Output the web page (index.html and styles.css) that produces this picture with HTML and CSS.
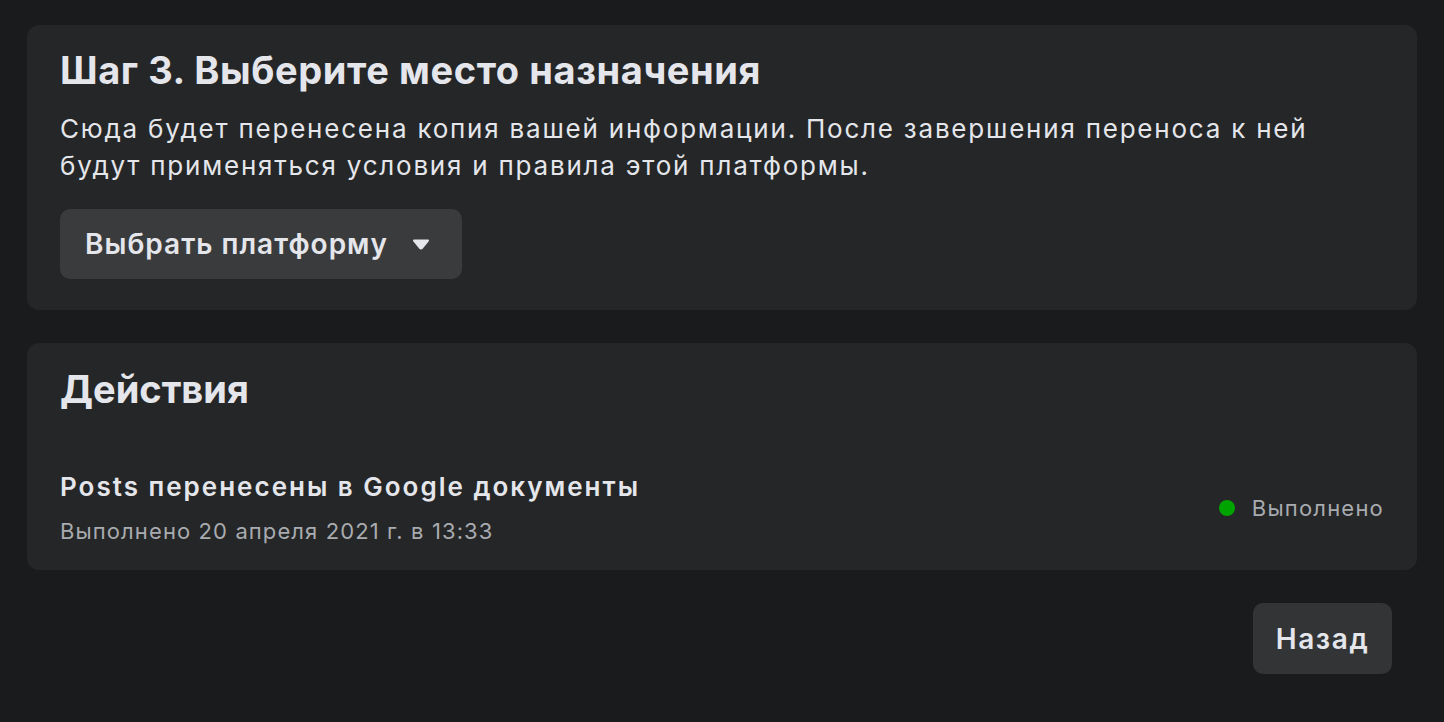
FILE: index.html
```html
<!DOCTYPE html>
<html lang="ru">
<head>
<meta charset="utf-8">
<link rel="stylesheet" href="styles.css">
</head>
<body>
<main class="page">
  <section class="card step">
    <h1 class="title">Шаг 3. Выберите место назначения</h1>
    <p class="desc">Сюда будет перенесена копия вашей информации. После завершения переноса к ней будут применяться условия и правила этой платформы.</p>
    <button class="select">
      <span>Выбрать платформу</span>
      <svg class="caret" width="18" height="11" viewBox="0 0 18 11"><path d="M2 1.5 H16 L9.9 9 Q9 10 8.1 9 Z" fill="#e4e6eb" stroke="#e4e6eb" stroke-width="2" stroke-linejoin="round"/></svg>
    </button>
  </section>
  <section class="card actions">
    <h2 class="title2">Действия</h2>
    <div class="row">
      <div class="info">
        <div class="name">Posts перенесены в Google документы</div>
        <div class="meta">Выполнено 20 апреля 2021 г. в 13:33</div>
      </div>
      <div class="status"><span class="dot"></span>Выполнено</div>
    </div>
  </section>
  <div class="footer">
    <button class="back">Назад</button>
  </div>
</main>
</body>
</html>
```
FILE: styles.css
```css
* { box-sizing: border-box; }
html, body { margin: 0; padding: 0; }
body {
  background: #1a1b1d;
  font-family: Inter, "Noto Sans", sans-serif;
  color: #e4e6eb;
  height: 722px;
  overflow: hidden;
}
.page {
  padding: 25px 27px 0 27px;
  display: flex;
  flex-direction: column;
  gap: 33px;
}
.card {
  background: #252628;
  border-radius: 12px;
}
.step {
  padding: 22px 33px 0 33px;
  height: 285px;
}
.title {
  margin: 0;
  font-size: 38px;
  line-height: 46px;
  font-weight: 700;
  letter-spacing: 0.6px;
  color: #e4e6eb;
}
.desc {
  margin: 17px 0 0;
  font-size: 26px;
  line-height: 37px;
  color: #e4e6eb;
  letter-spacing: 1.78px;
  max-width: 1300px;
}
.select {
  margin-top: 25px;
  height: 70px;
  padding: 0 32px 0 25px;
  background: #3a3b3d;
  border: 0;
  border-radius: 10px;
  color: #e4e6eb;
  font-family: inherit;
  font-size: 28px;
  font-weight: 600;
  letter-spacing: 1px;
  display: flex;
  align-items: center;
  gap: 24px;
}
.caret { display: block; }
.actions {
  height: 227px;
  padding: 23px 33px 0 33px;
}
.title2 {
  margin: 0;
  font-size: 38px;
  line-height: 46px;
  font-weight: 700;
  letter-spacing: 0;
}
.row {
  margin-top: 58px;
  display: flex;
  justify-content: space-between;
  align-items: center;
}
.name {
  font-size: 26px;
  line-height: 34px;
  font-weight: 600;
  letter-spacing: 2px;
}
.meta {
  margin-top: 13px;
  font-size: 22px;
  line-height: 28px;
  letter-spacing: 1.1px;
  color: #a8abaf;
}
.status {
  display: flex;
  align-items: center;
  gap: 17px;
  font-size: 22px;
  letter-spacing: 1.2px;
  color: #a8abaf;
}
.dot {
  width: 16px;
  height: 16px;
  border-radius: 50%;
  background: #00a400;
}
.footer {
  display: flex;
  justify-content: flex-end;
  padding-right: 25px;
}
.back {
  height: 71px;
  width: 139px;
  background: #333436;
  border: 0;
  border-radius: 10px;
  color: #e4e6eb;
  font-family: inherit;
  font-size: 28px;
  font-weight: 600;
  letter-spacing: 1.6px;
}
```
